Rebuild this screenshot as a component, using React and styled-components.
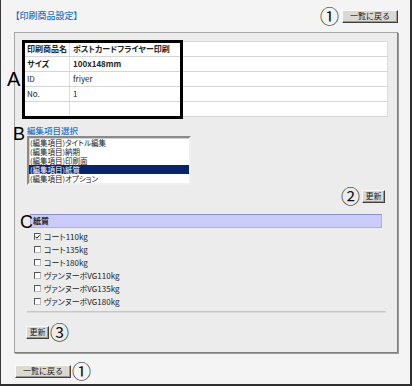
import React from 'react';
import styled, { createGlobalStyle } from 'styled-components';

const Global = createGlobalStyle`
  html, body { margin: 0; padding: 0; background: #f4f4f4; }
  body { font-family: "Noto Sans CJK JP", "Noto Sans", sans-serif; color: #222; }
  * { box-sizing: border-box; }
`;

const Frame = styled.div`
  width: 412px;
  height: 386px;
  background: #f4f4f4;
  border-left: 1px solid #3a3a3a;
  border-right: 2px solid #2e2e2e;
  border-bottom: 2px solid #2e2e2e;
  padding: 8px 12px 0 13px;
  display: flex;
  flex-direction: column;
  font-feature-settings: "palt";
`;

const Header = styled.div`
  height: 16px;
  display: flex;
  align-items: center;
  justify-content: space-between;
  padding-left: 1px;
  margin-bottom: 8px;
`;

const Title = styled.div`
  color: #1f72c4;
  font-size: 9px;
  line-height: 12px;
  font-weight: 500;
`;

const Group = styled.div`
  display: flex;
  align-items: center;
  gap: ${p => p.$gap ?? 3}px;
`;

const Num = styled.span`
  font-family: "Noto Sans CJK JP", sans-serif;
  font-size: 19px;
  line-height: 16px;
  color: #111;
`;

const Btn = styled.button`
  width: ${p => p.$w}px;
  height: 13px;
  padding: 0;
  margin: 0;
  background: #dcd9d2;
  border: 1px solid;
  border-color: #fafafa #404040 #404040 #fafafa;
  box-shadow: inset -1px -1px 0 #9a9890;
  font-family: "Noto Sans CJK JP", sans-serif;
  font-size: 8px;
  line-height: 10px;
  color: #222;
  display: flex;
  align-items: center;
  justify-content: center;
`;

const Panel = styled.div`
  width: 384px;
  background: #ececec;
  border: 1px solid #a6a6a6;
  border-right-color: #808080;
  border-bottom-color: #808080;
  box-shadow: 1px 1px 0 #9a9a9a;
  padding: 7px 9px 12px 8px;
  display: flex;
  flex-direction: column;
`;

const TableWrap = styled.div`
  position: relative;
  margin-top: 1px;
`;

const Table = styled.table`
  width: 100%;
  border-collapse: collapse;
  background: #fff;
  border: 1px solid #dadada;
  font-size: 8px;
  color: #222;
`;

const Row = styled.tr`
  height: 15px;
  font-weight: ${p => (p.$bold ? 700 : 400)};
`;

const Cell = styled.td`
  padding: 0 0 0 3px;
  border-bottom: 1px solid #d6d6d6;
  border-right: 1px solid #dedede;
  line-height: 14px;
  white-space: nowrap;
  width: ${p => (p.$w ? `${p.$w}px` : 'auto')};
`;

const Highlight = styled.div`
  position: absolute;
  left: -1px;
  top: -1px;
  width: 161px;
  height: 79px;
  border: 3px solid #000;
  pointer-events: none;
`;

const Marker = styled.span`
  position: absolute;
  left: ${p => p.$x}px;
  top: ${p => p.$y}px;
  font-family: "Liberation Sans", Arial, sans-serif;
  font-size: ${p => p.$size}px;
  line-height: ${p => p.$size}px;
  font-weight: 400;
  color: #000;
`;

const SectionTitle = styled.div`
  position: relative;
  margin: 7px 0 0 4px;
  color: #1f72c4;
  font-size: 8.5px;
  line-height: 12px;
  font-weight: 500;
`;

const ListBox = styled.div`
  margin-left: 4px;
  width: 164px;
  height: 49px;
  background: #fff;
  border: 2px solid;
  border-color: #8a8a8a #f0f0f0 #f0f0f0 #8a8a8a;
  box-shadow: inset 1px 1px 0 #d0d0d0;
  display: flex;
  flex-direction: column;
  font-size: 7.5px;
`;

const ListItem = styled.div`
  height: 9px;
  line-height: 9px;
  padding-left: 1px;
  white-space: nowrap;
  overflow: hidden;
  background: ${p => (p.$sel ? '#0a246a' : 'transparent')};
  color: ${p => (p.$sel ? '#fff' : '#222')};
`;

const RightRow = styled.div`
  display: flex;
  justify-content: flex-end;
  padding-right: 3px;
  margin-top: 3px;
`;

const Bar = styled.div`
  position: relative;
  margin: 10px 6px 0 7px;
  height: 14px;
  background: #ccccfb;
  border: 1px solid #aeaee6;
  border-top-color: #8f8fcc;
  padding-left: 2px;
  font-size: 8px;
  line-height: 12px;
  font-weight: 700;
  color: #222;
`;

const Checks = styled.div`
  margin: 2px 0 0 11px;
  display: flex;
  flex-direction: column;
`;

const CheckRow = styled.label`
  height: 13px;
  display: flex;
  align-items: center;
  gap: 3px;
  font-size: 8px;
  color: #222;
`;

const Box = styled.span`
  width: 7px;
  height: 7px;
  background: #fff;
  border: 1px solid;
  border-color: #555 #bbb #bbb #555;
  display: flex;
  align-items: center;
  justify-content: center;
`;

const Sep = styled.div`
  margin: 3px 2px 0 4px;
  border-top: 1px solid #c6c6c6;
  border-bottom: 1px solid #dadada;
`;

const LeftRow = styled.div`
  display: flex;
  align-items: center;
  gap: ${p => p.$gap ?? 1}px;
  margin: ${p => p.$m};
`;

const options = [
  ['コート110kg', true],
  ['コート135kg', false],
  ['コート180kg', false],
  ['ヴァンヌーボVG110kg', false],
  ['ヴァンヌーボVG135kg', false],
  ['ヴァンヌーボVG180kg', false],
];

const items = ['タイトル編集', '納期', '印刷面', '紙質', 'オプション'];

export default function App() {
  return (
    <>
      <Global />
      <Frame>
        <Header>
          <Title>【印刷商品設定】</Title>
          <Group>
            <Num>①</Num>
            <Btn $w={56}>一覧に戻る</Btn>
          </Group>
        </Header>
        <Panel>
          <TableWrap>
            <Table>
              <tbody>
                <Row $bold>
                  <Cell $w={46}>印刷商品名</Cell>
                  <Cell>ポストカードフライヤー印刷</Cell>
                </Row>
                <Row $bold>
                  <Cell $w={46}>サイズ</Cell>
                  <Cell>100x148mm</Cell>
                </Row>
                <Row>
                  <Cell $w={46}>ID</Cell>
                  <Cell>friyer</Cell>
                </Row>
                <Row>
                  <Cell $w={46}>No.</Cell>
                  <Cell>1</Cell>
                </Row>
                <Row>
                  <Cell $w={46}></Cell>
                  <Cell></Cell>
                </Row>
              </tbody>
            </Table>
            <Highlight />
            <Marker $x={-16} $y={28} $size={20}>A</Marker>
          </TableWrap>
          <SectionTitle>
            <Marker $x={-14} $y={1} $size={18}>B</Marker>
            編集項目選択
          </SectionTitle>
          <ListBox>
            {items.map(t => (
              <ListItem key={t} $sel={t === '紙質'}>(編集項目){t}</ListItem>
            ))}
          </ListBox>
          <RightRow>
            <Group $gap={2}>
              <Num>②</Num>
              <Btn $w={23}>更新</Btn>
            </Group>
          </RightRow>
          <Bar>
            <Marker $x={-11} $y={-2} $size={18}>C</Marker>
            紙質
          </Bar>
          <Checks>
            {options.map(([label, on]) => (
              <CheckRow key={label}>
                <Box>
                  {on && (
                    <svg width="6" height="6" viewBox="0 0 6 6">
                      <path d="M0.5 2.5 L2.3 4.5 L5.5 0.8" fill="none" stroke="#111" strokeWidth="1.2" />
                    </svg>
                  )}
                </Box>
                {label}
              </CheckRow>
            ))}
          </Checks>
          <Sep />
          <LeftRow $m="11px 0 0 3px">
            <Btn $w={23}>更新</Btn>
            <Num>③</Num>
          </LeftRow>
        </Panel>
        <LeftRow $m="10px 0 0 1px">
          <Btn $w={56}>一覧に戻る</Btn>
          <Num>①</Num>
        </LeftRow>
      </Frame>
    </>
  );
}
